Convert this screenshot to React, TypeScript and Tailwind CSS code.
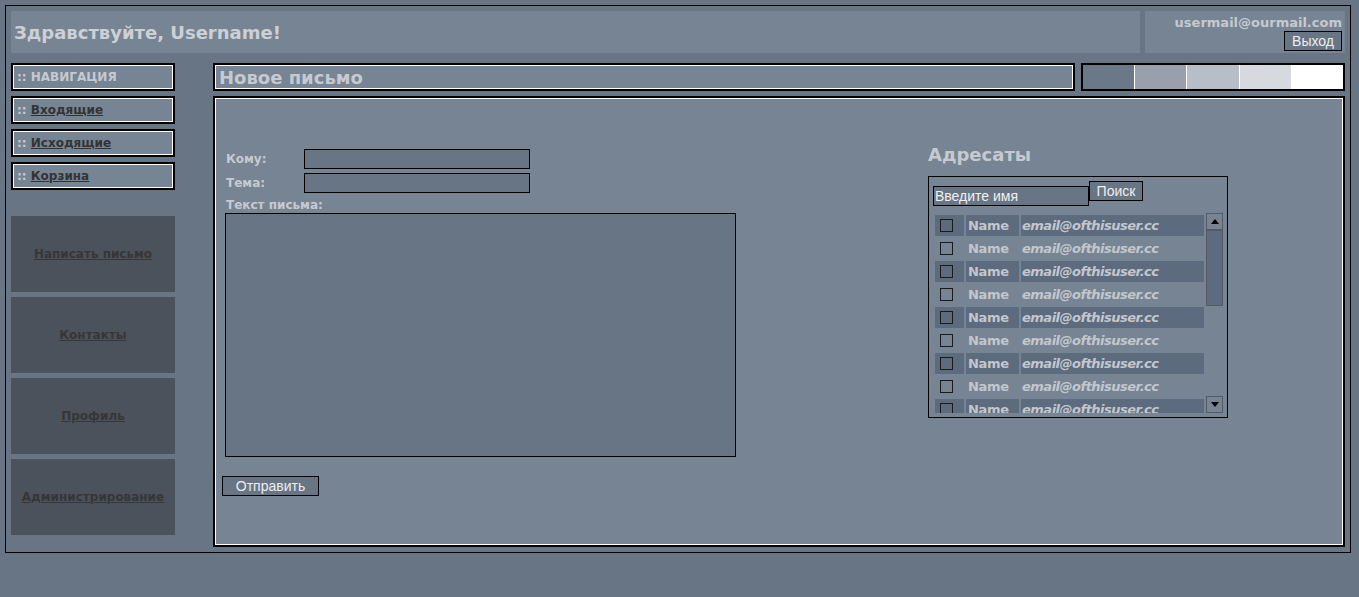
import type { ReactNode } from 'react'

const verdana = "font-['DejaVu_Sans',Verdana,sans-serif]"
const arial = "font-['Liberation_Sans',Arial,sans-serif]"

function NavBox({ children }: { children: ReactNode }) {
  return (
    <div className="h-[28px] border-2 border-black">
      <div className="flex h-full items-center border border-white bg-[#778493] pl-[3px] text-[12px] font-bold text-[#c6cad0]">
        {children}
      </div>
    </div>
  )
}

function NavLink({ label }: { label: string }) {
  return (
    <NavBox>
      <span>::&nbsp;</span>
      <a href="#" className="text-[#333333] underline">
        {label}
      </a>
    </NavBox>
  )
}

function BigButton({ label }: { label: string }) {
  return (
    <div className="flex h-[76px] items-center justify-center bg-[#4b525c]">
      <a href="#" className="text-[12px] font-bold text-[#363636] underline">
        {label}
      </a>
    </div>
  )
}

function ContactRow({ dark }: { dark: boolean }) {
  const cell = dark ? 'bg-[#5d6b7e]' : ''
  return (
    <div className="flex h-[21px] shrink-0 gap-[2px]">
      <div className={`flex w-[29px] items-center pl-[5px] ${cell}`}>
        <span className="block h-[13px] w-[13px] border border-[#1a1a1a]" />
      </div>
      <div className={`flex w-[53px] items-center pl-[2px] text-[13px] font-bold tracking-[-0.3px] ${cell}`}>
        Name
      </div>
      <div className={`flex w-[183px] items-center pl-[1px] text-[13px] font-bold italic tracking-[-0.5px] ${cell}`}>
        email@ofthisuser.cc
      </div>
    </div>
  )
}

export default function App() {
  const swatches = ['bg-[#6b7888]', 'bg-[#99a0ab]', 'bg-[#b8bec7]', 'bg-[#d6d9dd]', 'bg-white']
  const rows = [true, false, true, false, true, false, true, false, true]

  return (
    <div className={`h-[597px] bg-[#687585] pl-[5px] pt-[5px] ${verdana}`}>
      <div className="flex h-[548px] w-[1346px] flex-col border border-black p-[5px]">
        {/* header */}
        <div className="flex h-[42px] gap-[5px]">
          <div className="flex flex-1 items-center bg-[#778493] pl-[3px] text-[18px] font-bold text-[#cdd0d5]">
            Здравствуйте, Username!
          </div>
          <div className="flex w-[200px] flex-col items-end bg-[#778493] pr-[3px] pt-[4px]">
            <div className="text-[13px] leading-[15px] font-bold text-[#c6cad0]">usermail@ourmail.com</div>
            <button
              className={`mt-[1px] h-[20px] w-[58px] border border-black bg-[#687585] text-[14px] leading-[18px] text-[#eeeeee] ${arial}`}
            >
              Выход
            </button>
          </div>
        </div>

        {/* body */}
        <div className="mt-[10px] flex flex-1 gap-[38px]">
          {/* left column */}
          <div className="flex w-[164px] flex-col">
            <div className="flex flex-col gap-[5px]">
              <NavBox>:: НАВИГАЦИЯ</NavBox>
              <NavLink label="Входящие" />
              <NavLink label="Исходящие" />
              <NavLink label="Корзина" />
            </div>
            <div className="mt-[26px] flex flex-col gap-[5px]">
              <BigButton label="Написать письмо" />
              <BigButton label="Контакты" />
              <BigButton label="Профиль" />
              <BigButton label="Администрирование" />
            </div>
          </div>

          {/* main column */}
          <div className="flex flex-1 flex-col gap-[5px]">
            <div className="flex h-[28px] gap-[6px]">
              <div className="flex-1 border-2 border-black">
                <div className="flex h-full items-center border border-white bg-[#778493] pl-[3px] text-[18px] font-bold text-[#c6cad0]">
                  Новое письмо
                </div>
              </div>
              <div className="flex w-[264px] border-2 border-black">
                {swatches.map((s, i) => (
                  <div key={i} className={`flex-1 ${s} ${i < 4 ? 'border-r border-white' : ''}`} />
                ))}
              </div>
            </div>

            <div className="flex-1 border-2 border-black">
              <div className="flex h-full border border-white bg-[#778493] text-[#c6cad0]">
                {/* form */}
                <div className="flex w-[521px] flex-col pl-[9px] pt-[50px]">
                  <div className="flex h-[20px] items-center">
                    <label className="w-[79px] pl-[1px] text-[12px] font-bold">Кому:</label>
                    <input className="h-[20px] w-[226px] border border-black bg-[#687585] outline-none" />
                  </div>
                  <div className="mt-[4px] flex h-[20px] items-center">
                    <label className="w-[79px] pl-[1px] text-[12px] font-bold">Тема:</label>
                    <input className="h-[20px] w-[226px] border border-black bg-[#687585] outline-none" />
                  </div>
                  <div className="h-[20px] pl-[1px] text-[12px] leading-[24px] font-bold">Текст письма:</div>
                  <textarea className="block h-[244px] w-[511px] resize-none border border-black bg-[#687585] outline-none" />
                  <button
                    className={`-ml-[3px] mt-[19px] h-[20px] w-[97px] border border-black bg-[#687585] text-[14px] leading-[18px] text-[#eeeeee] ${arial}`}
                  >
                    Отправить
                  </button>
                </div>

                {/* addressees */}
                <div className="ml-[191px] flex flex-col pt-[45px]">
                  <div className="text-[18px] leading-[22px] font-bold text-[#c6cad0]">Адресаты</div>
                  <div className="mt-[10px] w-[300px] border border-black px-[4px] pb-[4px] pt-[4px]">
                    <div className="flex items-start">
                      <input
                        defaultValue="Введите имя"
                        className={`mt-[5px] h-[20px] w-[156px] border border-black bg-[#687585] pl-[1px] text-[14px] text-[#f0f0f0] outline-none ${arial}`}
                      />
                      <button
                        className={`h-[20px] w-[54px] border border-black bg-[#687585] text-[14px] leading-[18px] text-[#eeeeee] ${arial}`}
                      >
                        Поиск
                      </button>
                    </div>
                    <div className="mt-[7px] flex h-[200px]">
                      <div className="flex w-[273px] flex-col gap-[2px] overflow-hidden p-[2px] text-[#c3c7cd]">
                        {rows.map((d, i) => (
                          <ContactRow key={i} dark={d} />
                        ))}
                      </div>
                      <div className="flex w-[17px] flex-col">
                        <div className="flex h-[17px] items-center justify-center border border-[#555b63] bg-[#778493]">
                          <svg width="8" height="5" viewBox="0 0 8 5">
                            <path d="M4 0 L8 5 L0 5 Z" fill="#000" />
                          </svg>
                        </div>
                        <div className="h-[76px] border border-[#555b63] bg-[#5d6b7e]" />
                        <div className="flex-1" />
                        <div className="flex h-[17px] items-center justify-center border border-[#555b63] bg-[#778493]">
                          <svg width="8" height="5" viewBox="0 0 8 5">
                            <path d="M0 0 L8 0 L4 5 Z" fill="#000" />
                          </svg>
                        </div>
                      </div>
                    </div>
                  </div>
                </div>
              </div>
            </div>
          </div>
        </div>
      </div>
    </div>
  )
}
